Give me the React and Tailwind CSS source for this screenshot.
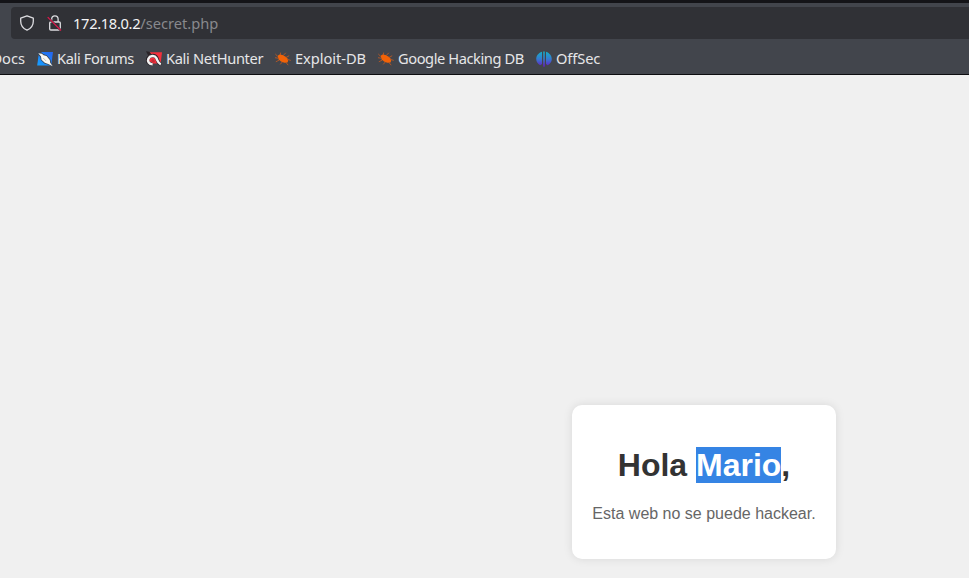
import React from "react";

function ShieldIcon() {
  return (
    <svg className="h-4 w-4 shrink-0" viewBox="0 0 16 16" fill="none" stroke="#dcdce0" strokeWidth="1.3" strokeLinejoin="round">
      <path d="M8 .8 14.3 3.1V6.2C14.3 10.6 11.8 13.5 8 15.2 4.2 13.5 1.7 10.6 1.7 6.2V3.1Z" />
    </svg>
  );
}

function InsecureLockIcon() {
  return (
    <svg className="h-4 w-4 shrink-0" viewBox="0 0 16 16" fill="none">
      <path d="M4.7 7V4A3.2 3.2 0 0 1 11.1 4V7M3.7 7H12.2Q13.3 7 13.3 8.1V13.9Q13.3 15 12.2 15H3.8Q2.7 15 2.7 13.9V8.1Q2.7 7 3.7 7Z" stroke="#dcdce0" strokeWidth="1.3" />
      <path d="M.7 2.2 14 15.5" stroke="#303136" strokeWidth="2.2" />
      <path d="M.7 2.2 14 15.5" stroke="#e0184c" strokeWidth="1.2" />
    </svg>
  );
}

function ForumsIcon() {
  return (
    <svg className="h-4 w-4 shrink-0" viewBox="0 0 16 16">
      <defs>
        <linearGradient id="forums" x1="0" y1="1" x2="1" y2="0">
          <stop offset="0" stopColor="#16a0ff" />
          <stop offset="1" stopColor="#2563ef" />
        </linearGradient>
      </defs>
      <path d="M2 1H16L14.2 14.6H.2Z" fill="url(#forums)" />
      <path d="M0 .2 3.8 .8 6.2 3 9.8 4.2 13.4 8.6 14.2 12.2 16 15.8 11.2 13.7 7.4 12.4 3.8 9 3.3 6.1 .8 3.6Z" fill="#3a4452" />
      <path d="M1.3 2.2 4.8 2.8 6.6 4.2 9.5 5 12.8 9 13.2 11.7 15.7 15.2 11.2 13 7.8 11.8 4.5 8.8 4 5.6Z" fill="#f8f7f2" />
      <path d="M6.2 7 9.2 10" stroke="#8a8f8b" strokeWidth=".5" />
    </svg>
  );
}

function NetHunterIcon() {
  return (
    <svg className="h-4 w-4 shrink-0" viewBox="0 0 16 16">
      <path d="M3 1.2H16L14.6 12.5H2Z" fill="#f4303c" />
      <path d="M0 .3 3.4 .8 5.6 3.4 2 4.2Z" fill="#292428" />
      <path d="M6.2 13.2C2.6 13.2.6 10.2 2 7.3 3.6 4.2 8.8 3.6 10.5 6.7 11.9 9.3 11.6 12.2 15.2 13.6" fill="none" stroke="#29242a" strokeWidth="3.6" />
      <path d="M6.6 13.2C3 13.2 1.3 10.3 2.4 7.8 3.8 4.7 8.6 4 10.3 7 11.6 9.6 11.6 12 14.8 13.3" fill="none" stroke="#f5f3f3" strokeWidth="2.5" />
      <path d="M5 9.7 6.8 7.9 8.6 9.5 8.7 11.2 6.2 11.3Z" fill="#c52a35" />
    </svg>
  );
}

function ExploitIcon() {
  return (
    <svg className="h-4 w-4 shrink-0" viewBox="0 0 16 16" fill="none">
      <path d="M5.2 4.5 5.6 1.6M8 4.7 10.8 1.8M11 6.5 14.2 4.7M3 7.2 0 6.7M4.4 9 .8 10.8M7.3 11 5.2 13.4M11 11.5 13.2 14.2M12.8 8.5 15.8 9.4M2.5 5.2.3 3" stroke="#c65a20" strokeWidth=".8" />
      <path d="M2.6 4.8 4.6 3.5 7.5 4 9.8 5.2 12.2 7.2 13.2 9.7 12.5 11.5 9.3 11.7 6 10.4 3.6 8.2Z" fill="#f26207" />
    </svg>
  );
}

function OffSecIcon() {
  return (
    <svg className="h-4 w-4 shrink-0" viewBox="0 0 16 16">
      <defs>
        <linearGradient id="offsec" x1="0" y1="0" x2="0" y2="16" gradientUnits="userSpaceOnUse">
          <stop offset="0" stopColor="#12b3c6" />
          <stop offset=".5" stopColor="#347bd0" />
          <stop offset="1" stopColor="#6a16c4" />
        </linearGradient>
      </defs>
      <path d="M6 .8V13L4.2 14.2C-1.2 11.8-1.5 3.4 6 .8ZM7.2 .6H8.8V15.8H7.2ZM10 .8C17.5 3.4 17.2 11.8 11.8 14.2L10 13Z" fill="url(#offsec)" />
    </svg>
  );
}

function Bookmark({ icon, label, className }) {
  return (
    <div className={`flex h-5 shrink-0 items-center gap-1 whitespace-nowrap ${className}`}>
      {icon}
      <span className="-mt-0.5">{label}</span>
    </div>
  );
}

export default function App() {
  return (
    <div className="flex h-[578px] w-[969px] flex-col overflow-hidden bg-[#f0f0f0]">
      <header className="h-[75px] shrink-0 border-t-[3px] border-b border-t-[#141418] border-b-[#0d0d10] bg-[#42454c] pt-1 font-['Noto_Sans',sans-serif] text-[14.667px] leading-5 text-[#e6e6e8]">
        <div className="ml-[11px] flex h-8 items-center rounded-l bg-[#303136] pl-2">
          <ShieldIcon />
          <div className="ml-3 flex items-center gap-[10px]">
            <InsecureLockIcon />
            <span className="whitespace-nowrap">
              <span className="tracking-[-0.32px] text-[#f4f4f5]">172.18.0.2</span>
              <span className="text-[#88898d]">/secret.php</span>
            </span>
          </div>
        </div>
        <nav className="mt-[10px] flex h-5 items-center">
          <div className="-mt-0.5 flex w-[25px] shrink-0 justify-end overflow-hidden">
            <span>Docs</span>
          </div>
          <Bookmark className="ml-3 w-[109px] tracking-[-0.36px]" icon={<ForumsIcon />} label="Kali Forums" />
          <Bookmark className="w-[129px] tracking-[-0.34px]" icon={<NetHunterIcon />} label="Kali NetHunter" />
          <Bookmark className="w-[103px] tracking-[-0.05px]" icon={<ExploitIcon />} label="Exploit-DB" />
          <Bookmark className="w-[158px] tracking-[-0.43px]" icon={<ExploitIcon />} label="Google Hacking DB" />
          <Bookmark className="tracking-[-0.1px]" icon={<OffSecIcon />} label="OffSec" />
        </nav>
      </header>
      <main className="flex flex-1 items-start pt-[330px] pl-[572px] font-['Liberation_Sans',Arial,sans-serif]">
        <section className="h-[154px] w-[264px] rounded-[10px] bg-white px-5 pt-[42px] text-center shadow-[0_0_10px_rgba(0,0,0,0.1)]">
          <h1 className="text-[32px] leading-9 font-bold whitespace-nowrap text-[#333]">
            Hola <span className="bg-[#3584e4] text-white">Mario</span>,
          </h1>
          <p className="mt-[22px] text-base leading-[18px] whitespace-nowrap text-[#666]">Esta web no se puede hackear.</p>
        </section>
      </main>
    </div>
  );
}
